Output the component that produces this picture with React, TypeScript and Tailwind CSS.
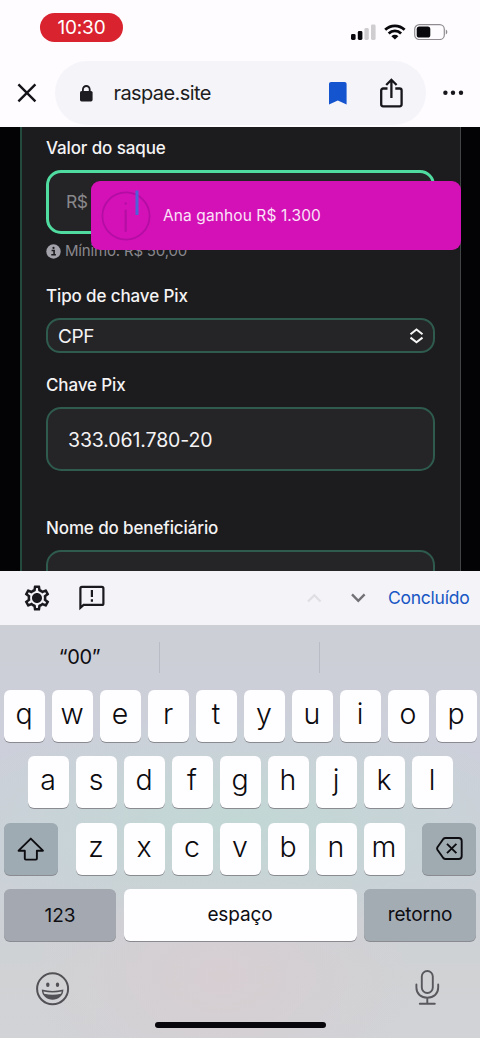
import React from 'react'
import { MdOutlineSettings } from 'react-icons/md'

const StatusBar = () => {
  return (
    <div className="flex h-[61px] items-start justify-between pl-10 pr-8">
      <div className="mt-[13px] flex h-[29px] w-[83px] items-center justify-center rounded-full bg-[#d9232f] pt-[2px] text-[19px] tracking-[-0.2px] text-white">
        10:30
      </div>
      <div className="mt-6 flex items-center">
        <svg width="25" height="16" viewBox="0 0 25 16">
          <rect x="0" y="10" width="4.6" height="6" rx="1.4" fill="#09080c" />
          <rect x="6.8" y="7" width="4.6" height="9" rx="1.4" fill="#09080c" />
          <rect x="13.4" y="4" width="4.4" height="12" rx="1.4" fill="#d0cdd1" />
          <rect x="20" y="0.5" width="4.6" height="15.5" rx="1.4" fill="#d0cdd1" />
        </svg>
        <svg className="ml-2" width="22" height="16" viewBox="0 0 22 16" fill="none" stroke="#09080c" strokeWidth="2.8">
          <path d="M1.2 5.7a14 14 0 0 1 19.4 0" />
          <path d="M4.7 9.4a9 9 0 0 1 12.4 0" />
          <path d="M7.4 12.2a5 5 0 0 1 7 0L10.9 15.6z" fill="#09080c" stroke="none" />
        </svg>
        <svg className="ml-2" width="34" height="16" viewBox="0 0 34 16">
          <rect x="0.7" y="0.7" width="29.6" height="14.8" rx="4.6" fill="none" stroke="#8f8b90" strokeWidth="1.2" />
          <rect x="2.7" y="2.6" width="13.6" height="11" rx="2.6" fill="#09080c" />
          <path d="M31.8 5.6c2 .8 2 4.2 0 5z" fill="#8f8b90" />
        </svg>
      </div>
    </div>
  )
}

const AddressBar = () => {
  return (
    <div className="flex h-[66px] items-start">
      <svg className="ml-[17px] mt-[22px]" width="20" height="20" viewBox="0 0 20 20" fill="none" stroke="#141317" strokeWidth="2.4">
        <path d="M1.4 1.4l17 17M18.4 1.4l-17 17" />
      </svg>
      <div className="ml-[18px] flex h-16 w-[371px] items-center rounded-full bg-[#f5f4f9]">
        <svg className="ml-[25px]" width="13" height="17" viewBox="0 0 13 17">
          <rect x="0" y="6" width="12.6" height="10.4" rx="1.6" fill="#1d1c21" />
          <path d="M2.9 7V4.4a3.4 3.4 0 0 1 6.8 0V7" fill="none" stroke="#1d1c21" strokeWidth="1.8" />
        </svg>
        <span className="ml-[20.5px] w-[215px] text-[20px] tracking-[-0.6px] text-[#1d1c21]">raspae.site</span>
        <svg className="shrink-0" width="18" height="23" viewBox="0 0 18 23">
          <path d="M0 2.2C0 .8.8 0 2 0h13.6c1.2 0 2 .8 2 2.2V22.6l-8.8-4-8.8 4z" fill="#1455cf" />
        </svg>
        <svg className="ml-[33.5px] shrink-0" width="23" height="30" viewBox="0 0 23 30" fill="none" stroke="#17161a" strokeWidth="2.3">
          <path d="M7.5 10.5H3.2a2 2 0 0 0-2 2v13.8a2 2 0 0 0 2 2h16.4a2 2 0 0 0 2-2V12.5a2 2 0 0 0-2-2h-4.3" />
          <path d="M11.4 20V2.5M6.2 7l5.2-5.2L16.6 7" />
        </svg>
      </div>
      <svg className="ml-[17px] mt-[29px]" width="22" height="6" viewBox="0 0 22 6" fill="#17161a">
        <circle cx="2.4" cy="2.8" r="2.2" />
        <circle cx="10" cy="2.8" r="2.2" />
        <circle cx="18" cy="2.8" r="2.2" />
      </svg>
    </div>
  )
}

const Toast = () => {
  return (
    <div className="absolute left-[91px] top-[54px] flex h-[69px] w-[370px] items-center rounded-[9px] bg-[#d411b7]">
      <svg className="ml-2.5" width="52" height="62" viewBox="0 0 52 62" fill="none">
        <circle cx="25" cy="31" r="23.6" stroke="#b30da4" strokeWidth="1.8" />
        <path d="M24.7 25.5V46" stroke="#b50ea5" strokeWidth="2.2" strokeLinecap="round" />
        <circle cx="24.7" cy="18.5" r="1.3" fill="#b50ea5" />
        <path d="M36 5.5V30" stroke="#4f61d6" strokeWidth="3" />
      </svg>
      <span className="ml-[10px] text-[15.5px] tracking-[0.1px] text-[#fbe3f8]">Ana ganhou R$ 1.300</span>
    </div>
  )
}

const WithdrawForm = () => {
  return (
    <section className="relative h-[444px] overflow-hidden bg-[#030306] px-5 text-[#f4f3f4]">
      <div className="-mt-1 w-[441px] border-x border-l-2 border-l-[#24493d] border-r-[#424546] bg-[#1c1b1d] pl-6 pr-[25px] pt-[13px] text-[17px] font-medium tracking-[-0.12px]">
        <label className="block h-6 leading-6">Valor do saque</label>
        <div className="mt-[10px] flex h-16 w-[389px] items-center rounded-[15px] border-3 border-[#50dca0] bg-[#242325] pl-[17px] text-[17.5px] font-normal tracking-[-0.4px] text-[#89888c]">
          R$
        </div>
        <div className="mt-[6px] flex h-[22px] items-center text-[15px] font-normal text-[#89888e]">
          <svg width="15" height="15" viewBox="0 0 15 15">
            <circle cx="7.5" cy="7.5" r="7.2" fill="#a3a1aa" />
            <path d="M5.6 6.5h2.5v4M5.3 10.8h4.6" stroke="#1c1b1d" strokeWidth="1.6" fill="none" />
            <circle cx="7.5" cy="3.9" r="1.1" fill="#1c1b1d" />
          </svg>
          <span className="ml-[4px] pt-px tracking-[-0.18px]">Mínimo: R$ 50,00</span>
        </div>
        <label className="mt-[22px] block h-6 leading-6">Tipo de chave Pix</label>
        <div className="mt-[10px] flex h-[35px] w-[389px] items-center justify-between rounded-[14px] border-2 border-[#2e5b4d] bg-[#252426] pl-[10px] pr-[9px] text-[19px] font-normal">
          <span className="pt-[3px] tracking-[-0.4px]">CPF</span>
          <svg width="15" height="16" viewBox="0 0 15 16" fill="none" stroke="#f7f7f7" strokeWidth="2">
            <path d="M1.5 6.2l6-4.7 6 4.7M1.5 9.6l6 4.7 6-4.7" />
          </svg>
        </div>
        <label className="mt-5 block h-6 leading-6">Chave Pix</label>
        <div className="mt-[10px] flex h-16 w-[389px] items-center rounded-[15px] border-2 border-[#2e5b4d] bg-[#252426] pl-5 pt-[3px] text-[19.5px] font-normal">
          333.061.780-20
        </div>
        <label className="mt-[45px] block h-6 leading-6">Nome do beneficiário</label>
        <div className="mt-[10px] h-16 w-[389px] rounded-[15px] border-2 border-[#2e5b4d] bg-[#252426]" />
      </div>
      <Toast />
    </section>
  )
}

const FormToolbar = () => {
  return (
    <div className="flex h-[54px] items-center bg-[#f4f3f8]">
      <div className="relative ml-[22px] size-[30px] shrink-0">
        <MdOutlineSettings size={30} color="#1a191d" />
        <div className="absolute left-[11px] top-[11px] size-2 rounded-full bg-[#1a191d]" />
      </div>
      <svg className="ml-[27px]" width="26" height="26" viewBox="0 0 26 26" fill="none" stroke="#1a191d" strokeWidth="2.2">
        <path d="M1.4 22.8V3.4c0-.9.6-1.5 1.5-1.5h20c.9 0 1.5.6 1.5 1.5v15c0 .9-.6 1.5-1.5 1.5H4.6z" />
        <path d="M12.9 5v7M12.9 14.3v2.5" />
      </svg>
      <svg className="ml-[202px]" width="15" height="10" viewBox="0 0 15 10" fill="none" stroke="#dfdee2" strokeWidth="2.2">
        <path d="M1 8.6l6.3-6.4 6.3 6.4" />
      </svg>
      <svg className="ml-[29px]" width="15" height="10" viewBox="0 0 15 10" fill="none" stroke="#727175" strokeWidth="2.4">
        <path d="M1 1.4l6.3 6.4 6.3-6.4" />
      </svg>
      <span className="ml-[22px] text-[17.5px] tracking-[-0.25px] text-[#1857c4]">Concluído</span>
    </div>
  )
}

const Key = ({ letter }: { letter: string }) => {
  return (
    <div className="flex h-[52px] w-[41px] justify-center rounded-[6px] bg-[#fefdff] text-[28.5px] font-[340] leading-[47px] text-[#0b0a0e] shadow-[0_1px_0_#898b91]">
      {letter}
    </div>
  )
}

const Letters = ({ letters }: { letters: string }) => {
  return (
    <div className="flex gap-[7px]">
      {letters.split('').map((letter) => (
        <Key key={letter} letter={letter} />
      ))}
    </div>
  )
}

const Keyboard = () => {
  return (
    <section className="h-[413px] overflow-hidden bg-[radial-gradient(ellipse_300px_110px_at_50%_195px,#c2d8d5_0%,transparent_100%),radial-gradient(ellipse_190px_130px_at_46%_350px,#d7ced2_0%,transparent_100%),linear-gradient(to_bottom,#cccfd5_0%,#cdcfda_25%,#cbd1d8_60%,#d0d2d4_85%,#d1d3d7_100%)] text-[#0e0d12]">
      <div className="flex h-[65px] items-center">
        <div className="w-[159px] pb-[2px] text-center text-[20px] tracking-[-0.4px]">“00”</div>
        <div className="h-[31px] w-[161px] border-x border-[#b9bbc5]" />
      </div>
      <div className="flex flex-col items-center gap-[14.4px]">
        <Letters letters="qwertyuiop" />
        <Letters letters="asdfghjkl" />
        <div className="flex w-[472px] justify-between">
          <div className="flex h-[52px] w-[54px] items-center justify-center rounded-[6px] bg-[#9fabb2] shadow-[0_1px_0_#898b91]">
            <svg width="28" height="24" viewBox="0 0 28 24" fill="none" stroke="#0d0c11" strokeWidth="1.9" strokeLinejoin="round">
              <path d="M13.8 1.6L26 13.7h-6.1v7.9q0 1-1 1H8.8q-1 0-1-1v-7.9H1.6z" />
            </svg>
          </div>
          <Letters letters="zxcvbnm" />
          <div className="flex h-[52px] w-[54px] items-center justify-center rounded-[6px] bg-[#9fabb1] shadow-[0_1px_0_#898b91]">
            <svg width="27" height="23" viewBox="0 0 27 23" fill="none" stroke="#0d0c11" strokeWidth="1.9" strokeLinejoin="round">
              <path d="M9.6 1h13.1q3 0 3 3v15q0 3-3 3H9.6q-1.4 0-2.3-1L1.6 13q-1-1.5 0-3L7.3 2Q8.2 1 9.6 1z" />
              <path d="M11 6.8l9.4 9.4M20.4 6.8L11 16.2" />
            </svg>
          </div>
        </div>
        <div className="flex w-[472px] gap-[7.5px] text-[19px] leading-[51px] tracking-[-0.1px]">
          <div className="h-[52px] w-28 rounded-[6px] bg-[#a4a9b1] text-center leading-[53px] shadow-[0_1px_0_#898b91]">123</div>
          <div className="h-[52px] w-[233px] rounded-[6px] bg-[#fefdff] text-center shadow-[0_1px_0_#898b91]">espaço</div>
          <div className="h-[52px] w-28 rounded-[6px] bg-[#a3abb3] text-center shadow-[0_1px_0_#898b91]">retorno</div>
        </div>
      </div>
      <div className="mt-[28px] flex justify-between pl-9 pr-10">
        <svg className="mt-[3px]" width="34" height="34" viewBox="0 0 34 34" fill="none" stroke="#525155" strokeWidth="2">
          <circle cx="16.6" cy="16.8" r="15.5" />
          <ellipse cx="11.8" cy="12.8" rx="1.7" ry="2.3" fill="#525155" stroke="none" />
          <ellipse cx="21.5" cy="12.8" rx="1.7" ry="2.3" fill="#525155" stroke="none" />
          <path d="M5.8 17.6q10.8 2.8 21.6 0c0 13.4-21.6 13.4-21.6 0z" fill="#525155" stroke="none" />
          <path d="M7.4 19.6q9.2 2 18.4 0l-.8 2.2q-8.4 1.9-16.8 0z" fill="#d0d2d4" stroke="none" />
        </svg>
        <svg width="25" height="37" viewBox="0 0 25 37" fill="none" stroke="#59585c" strokeWidth="1.9" strokeLinecap="round">
          <rect x="6.8" y="2" width="11" height="22" rx="5.5" />
          <path d="M1.4 15.5v3c0 6.5 4.6 10.2 10.9 10.2s10.9-3.7 10.9-10.2v-3M12.3 28.7v6M4.8 34.8h15" />
        </svg>
      </div>
      <div className="ml-[155px] mt-[16px] h-[6px] w-[171px] rounded-full bg-[#08070b]" />
    </section>
  )
}

const App = () => {
  return (
    <main className="h-[1038px] w-[480px] overflow-hidden bg-[#fefcff] font-['Inter','Liberation_Sans',sans-serif]">
      <StatusBar />
      <AddressBar />
      <WithdrawForm />
      <FormToolbar />
      <Keyboard />
    </main>
  )
}

export default App
